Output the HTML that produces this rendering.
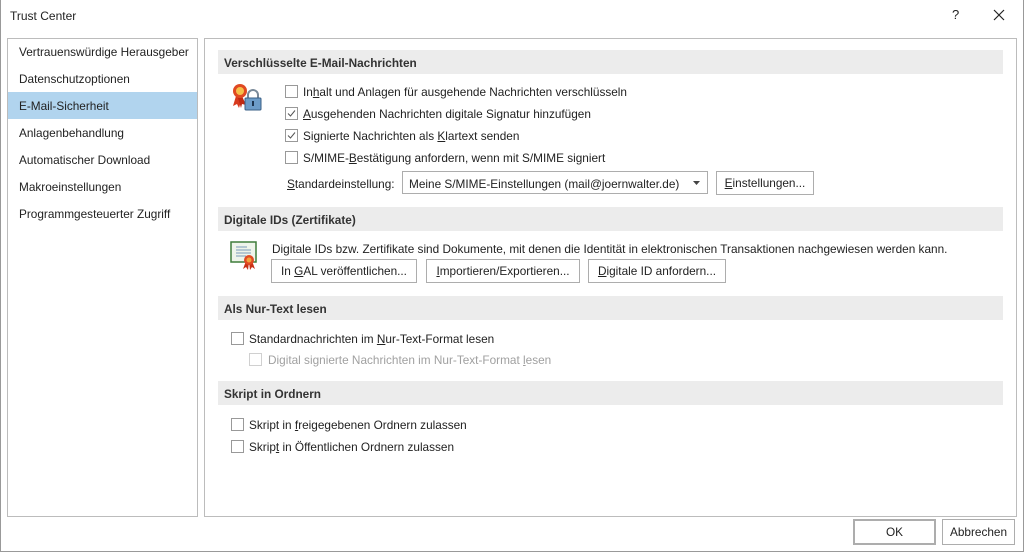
<!DOCTYPE html>
<html><head><meta charset="utf-8"><style>
*{margin:0;padding:0;box-sizing:border-box}
body{width:1024px;height:552px;background:#fff;font-family:"Liberation Sans",sans-serif;font-size:11.8px;color:#222;position:relative;overflow:hidden}
.a{position:absolute;white-space:nowrap;line-height:14px}
.t{margin-top:1px}
.panel{position:absolute;border:1px solid #bcbcbc;background:#fff}
.hdr{position:absolute;left:218px;width:785px;height:24px;background:#ececec;font-weight:bold;padding:6px 0 0 6px;color:#333}
.cb{position:absolute;width:13px;height:13px;border:1px solid #999;background:#fff}
.cb.dis{border-color:#d0d0d0}
.btn{position:absolute;border:1px solid #adadad;background:#fff;text-align:center;line-height:23px;height:24px}
u{text-decoration:underline}
</style></head><body>
<div style="position:absolute;left:0;top:0;width:1024px;height:552px;border:1px solid #999;border-top:none"></div>
<div class="a" style="left:10px;top:9px;font-size:12px">Trust Center</div>
<div class="a" style="left:952px;top:8px;font-size:13px">?</div>
<svg class="a" style="left:993px;top:9px" width="12" height="12"><path d="M1 1L11 11M11 1L1 11" stroke="#222" stroke-width="1.2"/></svg>

<div class="panel" style="left:7px;top:38px;width:191px;height:479px"></div>
<div style="position:absolute;left:8px;top:92px;width:189px;height:27px;background:#b1d4ee"></div>
<div class="a" style="left:19px;top:45px">Vertrauenswürdige Herausgeber</div>
<div class="a" style="left:19px;top:72px">Datenschutzoptionen</div>
<div class="a" style="left:19px;top:99px">E-Mail-Sicherheit</div>
<div class="a" style="left:19px;top:126px">Anlagenbehandlung</div>
<div class="a" style="left:19px;top:153px">Automatischer Download</div>
<div class="a" style="left:19px;top:180px">Makroeinstellungen</div>
<div class="a" style="left:19px;top:207px">Programmgesteuerter Zugriff</div>

<div class="panel" style="left:204px;top:38px;width:813px;height:479px"></div>

<div class="hdr" style="top:50px">Verschlüsselte E-Mail-Nachrichten</div>
<svg class="a" style="left:232px;top:82px" width="32" height="30">
<path d="M4 14L1 24L5 22L7 26L10 16Z" fill="#d83a1e"/><path d="M10 14L14 23L10 22L9 26L6 16Z" fill="#c02a12"/>
<circle cx="8" cy="9" r="7" fill="#e04a22"/><circle cx="8" cy="9" r="4" fill="#f6c04a"/>
<path d="M16 17v-4a5 5 0 0 1 10 0v4" fill="none" stroke="#7a8a99" stroke-width="2"/>
<rect x="13" y="16" width="16" height="12" rx="1" fill="#6c9cc8" stroke="#3a5f86"/>
<rect x="20" y="19" width="2" height="5" fill="#1d3550"/></svg>
<div class="cb" style="left:285px;top:85px"></div>
<div class="a" style="left:303px;top:85px">In<u>h</u>alt und Anlagen für ausgehende Nachrichten verschlüsseln</div>
<div class="cb" style="left:285px;top:107px"><svg width="11" height="11" style="position:absolute;left:0;top:0"><path d="M2 5.5L4.5 8L9 2.5" fill="none" stroke="#555" stroke-width="1"/></svg></div>
<div class="a" style="left:303px;top:107px"><u>A</u>usgehenden Nachrichten digitale Signatur hinzufügen</div>
<div class="cb" style="left:285px;top:129px"><svg width="11" height="11" style="position:absolute;left:0;top:0"><path d="M2 5.5L4.5 8L9 2.5" fill="none" stroke="#555" stroke-width="1"/></svg></div>
<div class="a" style="left:303px;top:129px">Signierte Nachrichten als <u>K</u>lartext senden</div>
<div class="cb" style="left:285px;top:151px"></div>
<div class="a" style="left:303px;top:151px">S/MIME-<u>B</u>estätigung anfordern, wenn mit S/MIME signiert</div>
<div class="a" style="left:287px;top:177px"><u>S</u>tandardeinstellung:</div>
<div style="position:absolute;left:402px;top:171px;width:306px;height:23px;border:1px solid #adadad"></div>
<div class="a" style="left:409px;top:177px">Meine S/MIME-Einstellungen (mail@joernwalter.de)</div>
<svg class="a" style="left:693px;top:181px" width="8" height="5"><path d="M0 0h7L3.5 4z" fill="#444"/></svg>
<div class="btn" style="left:716px;top:171px;width:98px"><u>E</u>instellungen...</div>

<div class="hdr" style="top:207px">Digitale IDs (Zertifikate)</div>
<svg class="a" style="left:230px;top:241px" width="28" height="30">
<rect x="1" y="1" width="25" height="20" fill="#eef4ea" stroke="#3f7d3a" stroke-width="1.5"/>
<path d="M6 6h11M6 9h15M6 12h15M6 15h10" stroke="#7b9ab8"/>
<path d="M16 20l-3 8 3-2 2 3 1-8zM22 20l3 8-3-2-2 3-1-8z" fill="#c83016"/>
<circle cx="19" cy="19" r="5" fill="#e04a22"/><circle cx="19" cy="19" r="2.5" fill="#f2a13a"/></svg>
<div class="a" style="left:272px;top:242px">Digitale IDs bzw. Zertifikate sind Dokumente, mit denen die Identität in elektronischen Transaktionen nachgewiesen werden kann.</div>
<div class="btn" style="left:271px;top:259px;width:146px">In <u>G</u>AL veröffentlichen...</div>
<div class="btn" style="left:426px;top:259px;width:154px"><u>I</u>mportieren/Exportieren...</div>
<div class="btn" style="left:588px;top:259px;width:138px"><u>D</u>igitale ID anfordern...</div>

<div class="hdr" style="top:296px">Als Nur-Text lesen</div>
<div class="cb" style="left:231px;top:332px"></div>
<div class="a" style="left:249px;top:332px">Standardnachrichten im <u>N</u>ur-Text-Format lesen</div>
<div class="cb dis" style="left:249px;top:353px"></div>
<div class="a" style="left:268px;top:353px;color:#a0a0a0">Digital signierte Nachrichten im Nur-Text-Format <u>l</u>esen</div>

<div class="hdr" style="top:381px">Skript in Ordnern</div>
<div class="cb" style="left:231px;top:418px"></div>
<div class="a" style="left:249px;top:418px">Skript in <u>f</u>reigegebenen Ordnern zulassen</div>
<div class="cb" style="left:231px;top:440px"></div>
<div class="a" style="left:249px;top:440px">Skrip<u>t</u> in Öffentlichen Ordnern zulassen</div>

<div class="btn" style="left:853px;top:519px;width:83px;height:26px;border:2px solid #adadad;line-height:22px">OK</div>
<div class="btn" style="left:942px;top:519px;width:73px;height:26px;line-height:24px">Abbrechen</div>
</body></html>
